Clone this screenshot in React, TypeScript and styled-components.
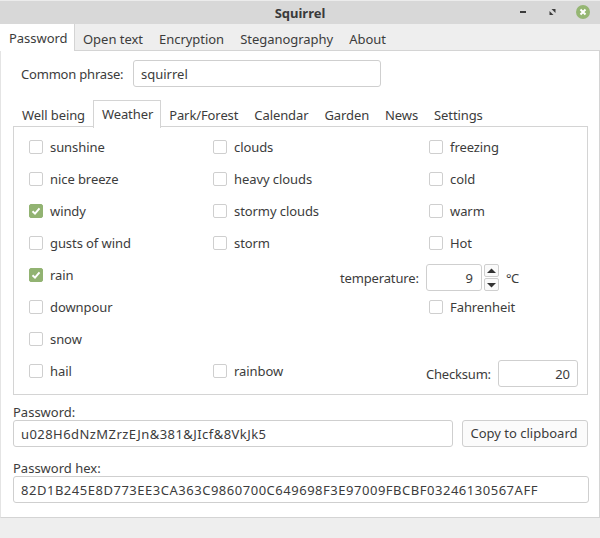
import styled, { createGlobalStyle } from "styled-components";

const GlobalStyle = createGlobalStyle`
  html, body {
    margin: 0;
    padding: 0;
    background: #eeeeee;
  }
  * {
    box-sizing: border-box;
  }
`;

const mainTabs = ["Password", "Open text", "Encryption", "Steganography", "About"];
const innerTabs = ["Well being", "Weather", "Park/Forest", "Calendar", "Garden", "News", "Settings"];

const Check = ({ label, checked = false, inset = false }: { label: string; checked?: boolean; inset?: boolean }) => (
  <CheckRow $inset={inset}>
    <CheckBox $checked={checked}>
      {checked && (
        <svg width="10" height="10" viewBox="0 0 10 10">
          <path d="M1.5 5.2 L4 7.6 L8.5 2.4" fill="none" stroke="#fff" strokeWidth="2" />
        </svg>
      )}
    </CheckBox>
    {label}
  </CheckRow>
);

const App = () => {
  return (
    <>
      <GlobalStyle />
      <Window>
        <TitleBar>
          <Title>Squirrel</Title>
          <WindowButtons>
            <svg width="10" height="10" viewBox="0 0 10 10">
              <rect x="4" y="4" width="6" height="2" fill="#3c3c3c" />
            </svg>
            <svg width="10" height="10" viewBox="0 0 10 10">
              <path d="M5.5 2 H9.5 V6 Z M3.5 4 L7.5 8 H3.5 Z" fill="#3c3c3c" />
            </svg>
            <CloseButton>
              <svg width="14" height="14" viewBox="0 0 14 14">
                <path d="M4.5 4.5 L9.5 9.5 M9.5 4.5 L4.5 9.5" stroke="#fff" strokeWidth="2" />
              </svg>
            </CloseButton>
          </WindowButtons>
        </TitleBar>
        <MainTabBar>
          {mainTabs.map((tab, i) => (
            <MainTab key={tab} $active={i === 0}>
              {tab}
            </MainTab>
          ))}
        </MainTabBar>
        <TabPage>
          <PhraseRow>
            <PhraseLabel>Common phrase:</PhraseLabel>
            <PhraseInput readOnly value="squirrel" />
          </PhraseRow>
          <InnerTabBar>
            {innerTabs.map((tab, i) => (
              <InnerTab key={tab} $active={i === 1}>
                {tab}
              </InnerTab>
            ))}
          </InnerTabBar>
          <Pane>
            <Check label="sunshine" />
            <Check label="clouds" />
            <span />
            <Check label="freezing" inset />

            <Check label="nice breeze" />
            <Check label="heavy clouds" />
            <span />
            <Check label="cold" inset />

            <Check label="windy" checked />
            <Check label="stormy clouds" />
            <span />
            <Check label="warm" inset />

            <Check label="gusts of wind" />
            <Check label="storm" />
            <span />
            <Check label="Hot" inset />

            <Check label="rain" checked />
            <span />
            <EndLabel>temperature:</EndLabel>
            <SpinGroup>
              <SpinInput readOnly value="9" />
              <SpinButtons>
                <SpinButton>
                  <svg width="9" height="6" viewBox="0 0 9 6">
                    <path d="M0 5 L4.5 0.5 L9 5 Z" fill="#333333" />
                  </svg>
                </SpinButton>
                <SpinButton>
                  <svg width="9" height="6" viewBox="0 0 9 6">
                    <path d="M0 1 L4.5 5.5 L9 1 Z" fill="#333333" />
                  </svg>
                </SpinButton>
              </SpinButtons>
              <Unit>°C</Unit>
            </SpinGroup>

            <Check label="downpour" />
            <span />
            <span />
            <Check label="Fahrenheit" inset />

            <Check label="snow" />
            <span />
            <span />
            <span />

            <Check label="hail" />
            <Check label="rainbow" />
            <span />
            <ChecksumGroup>
              <ChecksumLabel>Checksum:</ChecksumLabel>
              <ChecksumInput readOnly value="20" />
            </ChecksumGroup>
          </Pane>
          <FieldLabel>Password:</FieldLabel>
          <PasswordRow>
            <PasswordInput readOnly value="u028H6dNzMZrzEJn&381&JIcf&8VkJk5" />
            <CopyButton>Copy to clipboard</CopyButton>
          </PasswordRow>
          <FieldLabel>Password hex:</FieldLabel>
          <HexInput readOnly value="82D1B245E8D773EE3CA363C9860700C649698F3E97009FBCBF03246130567AFF" />
        </TabPage>
      </Window>
    </>
  );
};

const Window = styled.div`
  width: 600px;
  height: 538px;
  overflow: hidden;
  background: #eeeeee;
  color: #3c3c3c;
  font-family: "Noto Sans", sans-serif;
  font-size: 13px;
  line-height: 18px;
`;

const TitleBar = styled.div`
  position: relative;
  height: 24px;
  display: flex;
  align-items: center;
  justify-content: center;
  background: #d8d8d8;
  border-top: 1px solid #ececec;
`;

const Title = styled.div`
  font-weight: 700;
  font-size: 13px;
  color: #3a3a3a;
`;

const WindowButtons = styled.div`
  position: absolute;
  right: 10px;
  top: 4px;
  display: flex;
  align-items: center;
  gap: 20px;
`;

const CloseButton = styled.div`
  width: 14px;
  height: 14px;
  border-radius: 50%;
  background: #95b673;
  display: flex;
`;

const MainTabBar = styled.div`
  height: 26px;
  display: flex;
  background: #eeeeee;
  letter-spacing: -0.03px;
`;

const MainTab = styled.div<{ $active: boolean }>`
  height: ${(p) => (p.$active ? "27px" : "26px")};
  width: ${(p) => (p.$active ? "75px" : "auto")};
  padding: ${(p) => (p.$active ? "5px 0 0 9px" : "6px 8px 0")};
  background: ${(p) => (p.$active ? "#ffffff" : "transparent")};
  border-right: ${(p) => (p.$active ? "1px solid #d4d4d4" : "none")};
  position: relative;
  z-index: 1;
`;

const TabPage = styled.div`
  height: 468px;
  padding: 9px 10px 0 12px;
  background: #ffffff;
  border: 1px solid #d4d4d4;
  border-left-color: #e4e4e4;
`;

const PhraseRow = styled.div`
  display: flex;
  align-items: center;
  padding-left: 8px;
`;

const PhraseLabel = styled.span`
  width: 112px;
  letter-spacing: -0.2px;
`;

const TextInput = styled.input`
  display: block;
  width: 100%;
  height: 27px;
  padding: 0 7px;
  border: 1px solid #cfcfcf;
  border-radius: 3px;
  background: #ffffff;
  color: #3c3c3c;
  font: inherit;
  outline: none;
`;

const PhraseInput = styled(TextInput)`
  width: 248px;
`;

const PasswordInput = styled(TextInput)`
  letter-spacing: 0.44px;
`;

const HexInput = styled(TextInput)`
  letter-spacing: 0.52px;
`;

const InnerTabBar = styled.div`
  display: flex;
  height: 27px;
  margin-top: 13px;
  padding-left: 1px;
  letter-spacing: -0.1px;
`;

const InnerTab = styled.div<{ $active: boolean }>`
  height: ${(p) => (p.$active ? "28px" : "27px")};
  padding: ${(p) => (p.$active ? "4px 7px 0 8px" : "6px 8px 0")};
  background: ${(p) => (p.$active ? "#ffffff" : "transparent")};
  border: ${(p) => (p.$active ? "1px solid #d4d4d4" : "none")};
  border-bottom: none;
  position: relative;
  z-index: 1;
`;

const Pane = styled.div`
  display: grid;
  grid-template-columns: 184px 127px 86px 1fr;
  grid-auto-rows: 32px;
  height: 269px;
  margin-top: -1px;
  margin-right: 1px;
  padding: 4px 0 0 15px;
  border: 1px solid #d4d4d4;
`;

const CheckRow = styled.div<{ $inset: boolean }>`
  display: flex;
  align-items: center;
  gap: 7px;
  padding-left: ${(p) => (p.$inset ? "3px" : "0")};
  letter-spacing: -0.08px;
`;

const CheckBox = styled.span<{ $checked: boolean }>`
  width: 14px;
  height: 14px;
  display: flex;
  align-items: center;
  justify-content: center;
  border-radius: 2px;
  background: ${(p) => (p.$checked ? "#92b372" : "#ffffff")};
  border: 1px solid ${(p) => (p.$checked ? "#92b372" : "#cfcfcf")};
`;

const EndLabel = styled.div`
  align-self: end;
  height: 27px;
  display: flex;
  align-items: center;
  letter-spacing: -0.15px;
`;

const SpinGroup = styled.div`
  align-self: end;
  display: flex;
  align-items: center;
`;

const SpinInput = styled(TextInput)`
  width: 56px;
  padding-right: 8px;
  text-align: right;
`;

const SpinButtons = styled.div`
  display: flex;
  flex-direction: column;
  gap: 1px;
  margin-left: 2px;
`;

const SpinButton = styled.div`
  width: 15px;
  height: 13px;
  display: flex;
  align-items: center;
  justify-content: center;
  border: 1px solid #cfcfcf;
  border-radius: 2px;
  background: #fafafa;
`;

const Unit = styled.span`
  margin-left: 7px;
  letter-spacing: -0.5px;
`;

const ChecksumGroup = styled.div`
  align-self: end;
  display: flex;
  align-items: center;
`;

const ChecksumLabel = styled.span`
  width: 72px;
  letter-spacing: -0.2px;
`;

const ChecksumInput = styled(TextInput)`
  width: 80px;
  text-align: right;
`;

const FieldLabel = styled.div`
  margin-top: 9px;
  height: 16px;
  line-height: 16px;
`;

const PasswordRow = styled.div`
  display: flex;
  gap: 9px;
  margin-right: 1px;
  margin-bottom: 13px;
  & + ${FieldLabel} {
    margin-top: 0;
  }
`;

const CopyButton = styled.button`
  flex: none;
  width: 126px;
  height: 27px;
  padding: 0 2px 2px 0;
  border: 1px solid #cfcfcf;
  border-radius: 3px;
  background: #fbfbfb;
  color: #3c3c3c;
  font: inherit;
`;

export default App;
